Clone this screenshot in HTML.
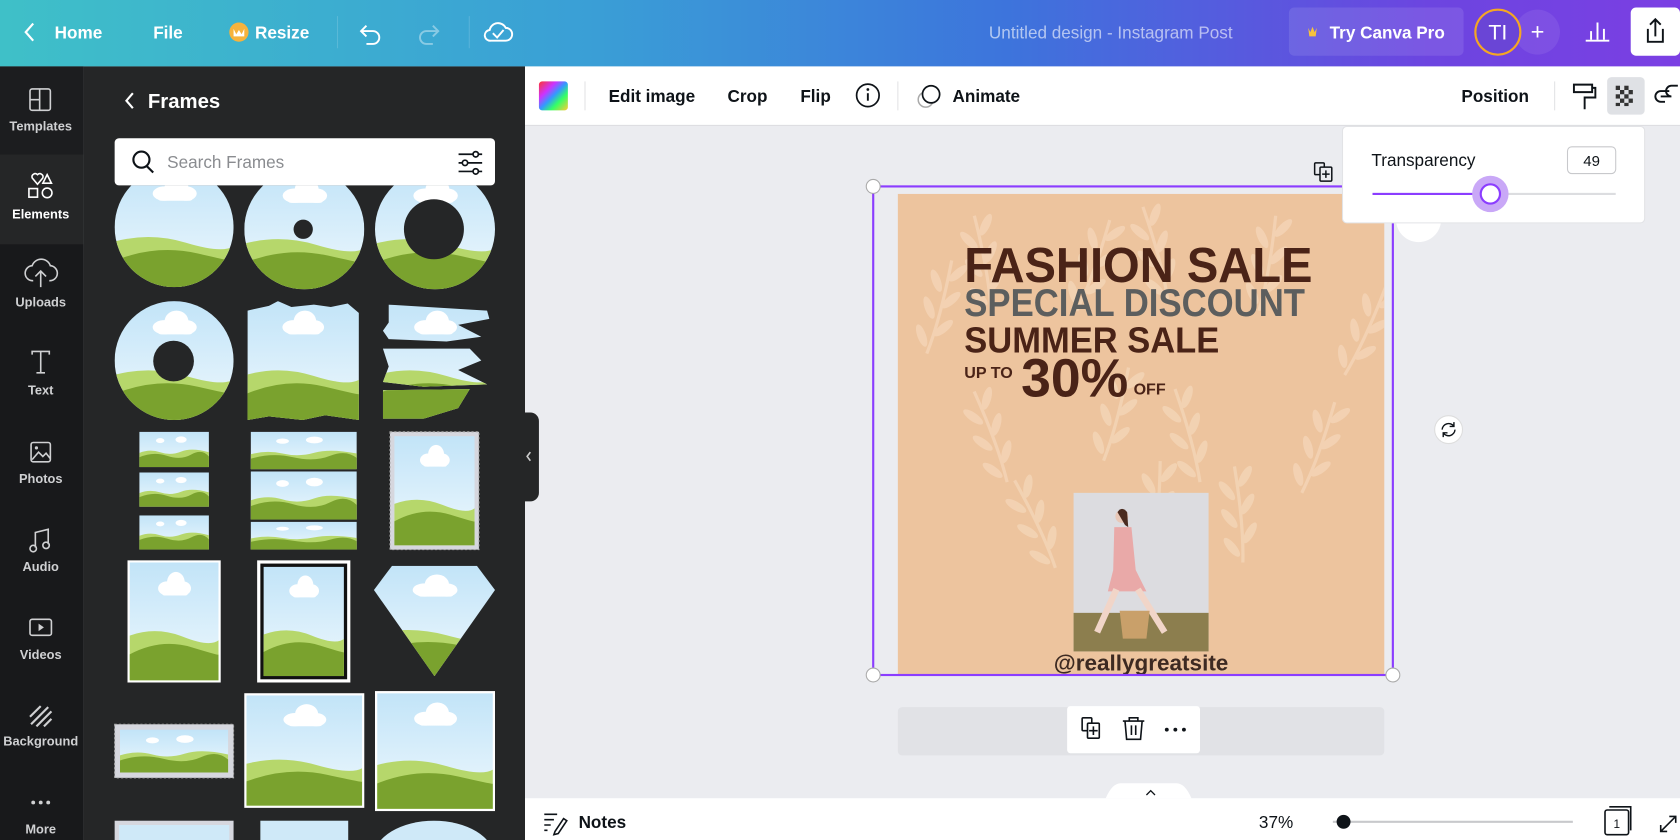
<!DOCTYPE html>
<html><head><meta charset="utf-8"><style>
html,body{margin:0;padding:0;width:1680px;height:840px;overflow:hidden;background:#ebecf0}
svg{display:block;overflow:hidden}
text{font-family:"Liberation Sans",sans-serif}
</style></head><body>
<svg width="1680" height="840" viewBox="0 0 1568 784" preserveAspectRatio="none" xmlns="http://www.w3.org/2000/svg">
<defs>
<linearGradient id="top" x1="0" x2="1" y1="0" y2="0">
<stop offset="0" stop-color="#3fc0c8"/><stop offset="0.35" stop-color="#3a9fd6"/><stop offset="0.6" stop-color="#3d74dc"/><stop offset="0.85" stop-color="#6c45e0"/><stop offset="1" stop-color="#7b3fe3"/></linearGradient>
<linearGradient id="sky" x1="0" x2="0" y1="0" y2="1"><stop offset="0" stop-color="#c2e4f8"/><stop offset="1" stop-color="#eef8fd"/></linearGradient>
<linearGradient id="rb" x1="0" x2="1" y1="0" y2="1"><stop offset="0" stop-color="#f33"/><stop offset="0.3" stop-color="#c3f"/><stop offset="0.5" stop-color="#39f"/><stop offset="0.7" stop-color="#3f6"/><stop offset="1" stop-color="#fc3"/></linearGradient>
<g id="land">
<rect x="0" y="0" width="100" height="100" fill="url(#sky)"/>
<g fill="#fff"><ellipse cx="42" cy="22" rx="10" ry="6"/><ellipse cx="52" cy="17" rx="10" ry="9"/><ellipse cx="60" cy="22" rx="9" ry="6"/><rect x="36" y="21" width="30" height="7" rx="3"/></g>
<path d="M0 62 Q30 54 60 63 T100 66 V100 H0Z" fill="#b6d76b"/>
<path d="M0 78 Q35 64 70 72 T100 78 V100 H0Z" fill="#7aa22e"/>
</g>
<g id="landw">
<rect x="0" y="0" width="100" height="100" fill="url(#sky)"/>
<g fill="#fff"><ellipse cx="30" cy="25" rx="6" ry="7"/><ellipse cx="60" cy="22" rx="8" ry="9"/></g>
<path d="M0 60 Q15 48 30 58 T60 56 T100 58 V100 H0Z" fill="#b6d76b"/>
<path d="M0 72 Q20 55 40 68 T75 64 T100 70 V100 H0Z" fill="#7aa22e"/>
</g>
<clipPath id="c1"><rect x="100" y="173" width="380" height="611"/></clipPath>
<clipPath id="cd"><rect x="838" y="181" width="454" height="449"/></clipPath>
</defs>

<!-- top bar -->
<rect x="0" y="0" width="1568" height="62" fill="url(#top)"/>
<g fill="#fff" font-size="16" font-weight="bold">
<path d="M31 22 L24 30 L31 38" stroke="#fff" stroke-width="2" fill="none"/>
<text x="51" y="36">Home</text>
<text x="143" y="36">File</text>
<circle cx="223" cy="30" r="9" fill="#f6b33d"/><path d="M218 27 l2.5 5 2.5-4 2.5 4 2.5-5 v7 h-10z" fill="#fff"/>
<text x="238" y="36">Resize</text>
</g>
<g stroke="#fff" stroke-width="1.8" fill="none">
<path d="M342 24 l-5 5 5 5 M337 29 h11 a6 6 0 0 1 0 12 h-6"/>
<path d="M404 24 l5 5 -5 5 M409 29 h-11 a6 6 0 0 0 0 12 h6" stroke-opacity="0.4"/>
<path d="M458 38 h14 a6 6 0 0 0 0 -12 a8 8 0 0 0 -15 2 a5 5 0 0 0 1 10z M460 31 l4 4 6-7"/>
</g>
<line x1="315" y1="15" x2="315" y2="45" stroke="#fff" stroke-opacity="0.15"/>
<line x1="438" y1="15" x2="438" y2="45" stroke="#fff" stroke-opacity="0.15"/>
<text x="923" y="36" fill="#fff" fill-opacity="0.6" font-size="16">Untitled design - Instagram Post</text>
<rect x="1203" y="7" width="163" height="45" rx="5" fill="#fff" fill-opacity="0.1"/>
<path d="M1221 26 l2 4 2-5 2 5 2-4 -1 8 h-6z" fill="#f6c23d"/>
<text x="1241" y="36" fill="#fff" font-size="16" font-weight="bold">Try Canva Pro</text>
<circle cx="1435" cy="30" r="21" fill="#fff" fill-opacity="0.08"/>
<circle cx="1398" cy="30" r="21" fill="#6a45d6" stroke="#f5a623" stroke-width="2"/>
<text x="1398" y="37" fill="#fff" font-size="20" text-anchor="middle">TI</text>
<text x="1435" y="37" fill="#fff" font-size="22" text-anchor="middle">+</text>
<g stroke="#fff" stroke-width="1.8"><path d="M1480 38 h22 M1485 37 v-8 M1491 37 v-16 M1497 37 v-10"/></g>
<rect x="1522" y="7" width="46" height="45" rx="5" fill="#fff"/>
<path d="M1538 27 v12 h14 v-12 M1545 34 v-15 M1540 23 l5-5 5 5" stroke="#0e1318" stroke-width="1.8" fill="none"/>

<!-- left rail -->
<rect x="0" y="62" width="78" height="722" fill="#18191b"/>
<rect x="0" y="144" width="78" height="84" fill="#252627"/>
<rect x="0" y="62" width="78" height="82" fill="#1c1d1f"/>
<g fill="#cfd0d2" font-size="12" text-anchor="middle" font-weight="bold">
<rect x="28" y="83" width="19" height="20" fill="none" stroke="#cfd0d2" stroke-width="1.5" rx="2"/><path d="M28 93 h9 M37 83 v20" stroke="#cfd0d2" stroke-width="1.5"/>
<text x="38" y="122">Templates</text>
<g stroke="#fff" stroke-width="1.5" fill="none"><path d="M30 166 a3 3 0 0 1 5 -3 a3 3 0 0 1 5 3 l-5 6z"/><path d="M44 163 l4 8 h-8z"/><rect x="27" y="176" width="8" height="8"/><circle cx="44" cy="180" r="4.5"/></g>
<text x="38" y="204" fill="#fff">Elements</text>
<path d="M31 262 a7 7 0 0 1 -1 -14 a9 9 0 0 1 17 0 a7 7 0 0 1 -1 14 M38 268 v-14 M33 258 l5-5 5 5" stroke="#cfd0d2" stroke-width="1.5" fill="none"/>
<text x="38" y="286">Uploads</text>
<path d="M30 331 v-3 h16 v3 M38 328 v20 M34 348 h8" stroke="#cfd0d2" stroke-width="1.5" fill="none"/>
<text x="38" y="368">Text</text>
<rect x="29" y="413" width="18" height="18" rx="2" fill="none" stroke="#cfd0d2" stroke-width="1.5"/><path d="M30 429 l6-7 4 4 3-3 4 5" stroke="#cfd0d2" stroke-width="1.5" fill="none"/><circle cx="34" cy="418" r="1.5"/>
<text x="38" y="451">Photos</text>
<path d="M33 511 v-14 l12-3 v14" stroke="#cfd0d2" stroke-width="1.5" fill="none"/><circle cx="31" cy="512" r="3" fill="none" stroke="#cfd0d2" stroke-width="1.5"/><circle cx="43" cy="509" r="3" fill="none" stroke="#cfd0d2" stroke-width="1.5"/>
<text x="38" y="533">Audio</text>
<rect x="28" y="578" width="20" height="15" rx="2" fill="none" stroke="#cfd0d2" stroke-width="1.5"/><path d="M36 582 l5 3.5 -5 3.5z"/>
<text x="38" y="615">Videos</text>
<path d="M28 669 l10-10 M29 676 l16-16 M34 678 l14-14 M41 678 l7-7" stroke="#cfd0d2" stroke-width="2"/>
<text x="38" y="696">Background</text>
<circle cx="31" cy="749" r="1.8"/><circle cx="38" cy="749" r="1.8"/><circle cx="45" cy="749" r="1.8"/>
<text x="38" y="778">More</text>
</g>

<!-- panel -->
<rect x="78" y="62" width="412" height="722" fill="#252627"/>
<path d="M124 87 l-6 7 6 7" stroke="#fff" stroke-width="2" fill="none"/>
<text x="138" y="101" fill="#fff" font-size="19" font-weight="bold">Frames</text>
<g clip-path="url(#c1)">
<svg x="107" y="156" width="111" height="112" viewBox="0 0 100 100" preserveAspectRatio="none"><clipPath id="e1"><ellipse cx="50" cy="50" rx="50" ry="50"/></clipPath><use href="#land" clip-path="url(#e1)"/></svg>
<svg x="228" y="158" width="112" height="112" viewBox="0 0 100 100" preserveAspectRatio="none"><clipPath id="e2"><circle cx="50" cy="50" r="50"/></clipPath><use href="#land" clip-path="url(#e2)"/></svg>
<circle cx="283" cy="214" r="9" fill="#252627"/>
<svg x="350" y="158" width="112" height="112" viewBox="0 0 100 100" preserveAspectRatio="none"><use href="#land" clip-path="url(#e2)"/></svg>
<circle cx="405" cy="214" r="28" fill="#252627"/>
<svg x="107" y="281" width="111" height="111" viewBox="0 0 100 100" preserveAspectRatio="none"><use href="#land" clip-path="url(#e2)"/></svg>
<circle cx="162" cy="337" r="19" fill="#252627"/>
<svg x="230" y="281" width="105" height="111" viewBox="0 0 100 100" preserveAspectRatio="none"><clipPath id="t1"><path d="M1 8 L20 4 L28 0 L40 5 L60 3 L75 5 L90 2 L100 10 L100 100 L70 96 L50 100 L20 97 L1 100Z"/></clipPath><use href="#land" clip-path="url(#t1)"/></svg>
<svg x="352" y="281" width="108" height="111" viewBox="0 0 100 100" preserveAspectRatio="none"><clipPath id="t2"><path d="M10 3 L95 8 L97 15 L70 20 L90 30 L60 34 L10 32 L5 25 L10 18Z M5 40 L80 40 L90 50 L70 58 L95 70 L40 72 L5 68 L10 55Z M5 75 L80 74 L70 90 L40 99 L5 99Z"/></clipPath><use href="#land" clip-path="url(#t2)"/></svg>
<svg x="130" y="403" width="65" height="33" viewBox="0 0 100 100" preserveAspectRatio="none"><use href="#landw"/></svg>
<svg x="130" y="441" width="65" height="32" viewBox="0 0 100 100" preserveAspectRatio="none"><use href="#landw"/></svg>
<svg x="130" y="481" width="65" height="32" viewBox="0 0 100 100" preserveAspectRatio="none"><use href="#landw"/></svg>
<svg x="234" y="403" width="99" height="35" viewBox="0 0 100 100" preserveAspectRatio="none"><use href="#landw"/></svg>
<svg x="234" y="440" width="99" height="45" viewBox="0 0 100 100" preserveAspectRatio="none"><use href="#landw"/></svg>
<svg x="234" y="487" width="99" height="26" viewBox="0 0 100 100" preserveAspectRatio="none"><use href="#landw"/></svg>
<rect x="364" y="403" width="83" height="110" fill="#d6d7de" stroke="#aaa" stroke-dasharray="2 2"/>
<svg x="368" y="407" width="75" height="102" viewBox="0 0 100 100" preserveAspectRatio="none"><use href="#land"/></svg>
<rect x="119" y="523" width="87" height="114" fill="#fff"/>
<svg x="121" y="525" width="83" height="110" viewBox="0 0 100 100" preserveAspectRatio="none"><use href="#land"/></svg>
<rect x="240" y="523" width="87" height="114" fill="#fff"/><rect x="243" y="526" width="81" height="108" fill="#111"/>
<svg x="246" y="529" width="75" height="102" viewBox="0 0 100 100" preserveAspectRatio="none"><use href="#land"/></svg>
<svg x="349" y="528" width="113" height="103" viewBox="0 0 100 100" preserveAspectRatio="none"><clipPath id="d1"><path d="M15 0 H85 L100 22 L50 100 L0 22Z"/></clipPath><use href="#land" clip-path="url(#d1)"/></svg>
<rect x="107" y="676" width="111" height="50" fill="#d6d7de" stroke="#aaa" stroke-dasharray="2 2"/>
<svg x="112" y="681" width="101" height="40" viewBox="0 0 100 100" preserveAspectRatio="none"><use href="#landw"/></svg>
<rect x="228" y="647" width="112" height="107" fill="#fff"/>
<svg x="230" y="649" width="108" height="103" viewBox="0 0 100 100" preserveAspectRatio="none"><use href="#land"/></svg>
<rect x="350" y="645" width="112" height="112" fill="#fff"/>
<svg x="352" y="647" width="108" height="108" viewBox="0 0 100 100" preserveAspectRatio="none"><use href="#land"/></svg>
<rect x="107" y="766" width="111" height="20" fill="#d6d7de"/><rect x="111" y="770" width="103" height="16" fill="#cfe9f8"/>
<rect x="243" y="766" width="82" height="20" fill="#cfe9f8"/>
<ellipse cx="405" cy="800" rx="56" ry="34" fill="#cfe9f8"/>
</g>
<rect x="107" y="129" width="355" height="44" rx="4" fill="#fff"/>
<circle cx="132" cy="149" r="7.5" fill="none" stroke="#0e1318" stroke-width="2"/><path d="M137 155 l6 6" stroke="#0e1318" stroke-width="2"/>
<text x="156" y="157" fill="#8a8c90" font-size="16">Search Frames</text>
<g stroke="#0e1318" stroke-width="1.6" fill="#fff"><path d="M428 144 h22 M428 152 h22 M428 160 h22"/><circle cx="444" cy="144" r="2.5"/><circle cx="434" cy="152" r="2.5"/><circle cx="444" cy="160" r="2.5"/></g>
<path d="M490 385 h5 a8 8 0 0 1 8 8 v67 a8 8 0 0 1 -8 8 h-5z" fill="#252627"/>
<path d="M495 422 l-3 4 3 4" stroke="#ccc" stroke-width="1.5" fill="none"/>

<!-- toolbar -->
<rect x="490" y="62" width="1078" height="55" fill="#fff"/>
<line x1="490" y1="117" x2="1568" y2="117" stroke="#dcdde0"/>
<rect x="503" y="76" width="27" height="27" rx="3" fill="url(#rb)"/>
<line x1="546" y1="76" x2="546" y2="103" stroke="#e2e3e5"/>
<g fill="#0e1318" font-size="16" font-weight="bold">
<text x="568" y="95">Edit image</text>
<text x="679" y="95">Crop</text>
<text x="747" y="95">Flip</text>
<text x="889" y="95">Animate</text>
<text x="1364" y="95">Position</text>
</g>
<circle cx="810" cy="89" r="10.5" fill="none" stroke="#0e1318" stroke-width="1.6"/><path d="M810 87 v7" stroke="#0e1318" stroke-width="1.8"/><circle cx="810" cy="83.5" r="1.3" fill="#0e1318"/>
<line x1="838" y1="76" x2="838" y2="103" stroke="#e2e3e5"/>
<circle cx="864" cy="93" r="7" fill="none" stroke="#aaa" stroke-width="1.4"/><circle cx="869" cy="88" r="8" fill="#fff" stroke="#0e1318" stroke-width="1.6"/>
<line x1="1451" y1="76" x2="1451" y2="103" stroke="#e2e3e5"/>
<path d="M1469 79 h17 v7 h-17z M1486 82 h3 v9 h-10 v5 M1479 96 v6" stroke="#0e1318" stroke-width="1.8" fill="none"/>
<rect x="1500" y="72" width="35" height="35" rx="4" fill="#dfe1e5"/>
<g fill="#333"><rect x="1508" y="80" width="4" height="4"/><rect x="1516" y="80" width="4" height="4"/><rect x="1512" y="84" width="4" height="4"/><rect x="1520" y="84" width="4" height="4"/><rect x="1508" y="88" width="4" height="4"/><rect x="1516" y="88" width="4" height="4"/><rect x="1512" y="92" width="4" height="4"/><rect x="1520" y="92" width="4" height="4"/><rect x="1508" y="96" width="4" height="3"/><rect x="1516" y="96" width="4" height="3"/></g>
<path d="M1558 85 h-8 a5 5 0 0 0 0 10 h4 M1550 90 h10 a5 5 0 0 1 0 -10 h6" stroke="#0e1318" stroke-width="1.8" fill="none"/>

<!-- canvas -->
<rect x="838" y="181" width="454" height="449" fill="#edc49e"/>
<g fill="#f5d8bb" clip-path="url(#cd)" opacity="0.7">
<g id="leaf"><path d="M0 0 Q4 -35 0 -90" stroke="#f5d8bb" stroke-width="3" fill="none"/>
<ellipse cx="-9" cy="-15" rx="4" ry="11" transform="rotate(-35 -9 -15)"/><ellipse cx="9" cy="-27" rx="4" ry="11" transform="rotate(35 9 -27)"/>
<ellipse cx="-9" cy="-42" rx="4" ry="11" transform="rotate(-35 -9 -42)"/><ellipse cx="9" cy="-54" rx="4" ry="11" transform="rotate(35 9 -54)"/>
<ellipse cx="-9" cy="-68" rx="4" ry="11" transform="rotate(-35 -9 -68)"/><ellipse cx="9" cy="-80" rx="4" ry="11" transform="rotate(35 9 -80)"/></g>
<use href="#leaf" transform="translate(865 330) rotate(15)"/>
<use href="#leaf" transform="translate(925 290) rotate(-10)"/>
<use href="#leaf" transform="translate(1005 290) rotate(20)"/>
<use href="#leaf" transform="translate(1090 280) rotate(-15)"/>
<use href="#leaf" transform="translate(1175 290) rotate(10)"/>
<use href="#leaf" transform="translate(1255 350) rotate(25)"/>
<use href="#leaf" transform="translate(940 450) rotate(-20)"/>
<use href="#leaf" transform="translate(1030 430) rotate(15)"/>
<use href="#leaf" transform="translate(1120 450) rotate(-15)"/>
<use href="#leaf" transform="translate(1215 460) rotate(20)"/>
<use href="#leaf" transform="translate(1160 525) rotate(-5)"/>
<use href="#leaf" transform="translate(985 530) rotate(-25)"/>
<use href="#leaf" transform="translate(1075 520) rotate(5)"/>
</g>
<g font-weight="bold">
<text x="900" y="263" font-size="46" fill="#4a2317" textLength="325" lengthAdjust="spacingAndGlyphs">FASHION SALE</text>
<text x="900" y="295" font-size="36" fill="#5c5e5e" textLength="318" lengthAdjust="spacingAndGlyphs">SPECIAL DISCOUNT</text>
<text x="900" y="329" font-size="34" fill="#4a2317" textLength="238" lengthAdjust="spacingAndGlyphs">SUMMER SALE</text>
<text x="900" y="353" font-size="15" fill="#4a2317">UP TO</text>
<text x="953" y="370" font-size="50" fill="#4a2317" textLength="100" lengthAdjust="spacingAndGlyphs">30%</text>
<text x="1058" y="368" font-size="15" fill="#4a2317">OFF</text>
</g>
<rect x="1002" y="460" width="126" height="148" fill="#dcdce0"/>
<rect x="1002" y="572" width="126" height="36" fill="#8c7e4e"/>
<circle cx="1047" cy="482" r="6" fill="#e9c8b8"/><path d="M1043 478 q4 -6 9 0 l1 14 -3 -2z" fill="#4a2b20"/>
<path d="M1040 492 h16 l4 40 l10 20 h-36 l5 -20z" fill="#e9a9a8"/>
<path d="M1042 550 l-18 40 M1062 550 l25 40" stroke="#f1d5c8" stroke-width="6"/>
<path d="M1045 570 h28 l-3 26 h-22z" fill="#c9a06a"/>
<text x="1065" y="626" font-size="21" font-weight="bold" fill="#3d2a22" text-anchor="middle">@reallygreatsite</text>

<!-- selection -->
<rect x="815" y="174" width="485" height="456" fill="none" stroke="#8b3dff" stroke-width="2"/>
<g fill="#fff" stroke="#aaa" stroke-width="1"><circle cx="815" cy="174" r="6.5"/><circle cx="815" cy="630" r="6.5"/><circle cx="1300" cy="630" r="6.5"/></g>
<g stroke="#0e1318" stroke-width="1.4" fill="none"><rect x="1227" y="152" width="9" height="11" rx="1"/><rect x="1232" y="156" width="11" height="13" rx="1" fill="#ebecf0"/><path d="M1237.5 159 v7 M1234 162.5 h7"/></g>
<circle cx="1324" cy="205" r="21" fill="#fff"/>
<circle cx="1352" cy="401" r="13" fill="#fff" stroke="#ddd"/>
<path d="M1346 401 a6 6 0 0 1 11 -3 M1358 401 a6 6 0 0 1 -11 3 M1357 394 v4 h-4 M1347 408 v-4 h4" stroke="#0e1318" stroke-width="1.3" fill="none"/>

<!-- popup -->
<rect x="1253" y="118" width="282" height="90" rx="4" fill="#fff" stroke="#e2e3e6"/>
<text x="1280" y="155" font-size="16" fill="#0e1318">Transparency</text>
<rect x="1463" y="137" width="45" height="25" rx="4" fill="#fff" stroke="#c8c9cc"/>
<text x="1485.5" y="155" font-size="14" fill="#0e1318" text-anchor="middle">49</text>
<line x1="1281" y1="181" x2="1508" y2="181" stroke="#dcdde0" stroke-width="2"/>
<line x1="1281" y1="181" x2="1391" y2="181" stroke="#8b3dff" stroke-width="2"/>
<circle cx="1391" cy="181" r="17" fill="#c9a8f7"/>
<circle cx="1391" cy="181" r="9" fill="#fff" stroke="#8b3dff" stroke-width="2"/>

<!-- page controls -->
<rect x="838" y="660" width="454" height="45" rx="4" fill="#e1e2e6"/>
<rect x="996" y="659" width="124" height="44" rx="3" fill="#fff"/>
<g stroke="#0e1318" stroke-width="1.5" fill="none"><rect x="1010" y="670" width="9" height="12" rx="1"/><rect x="1015" y="675" width="11" height="14" rx="1" fill="#fff"/><path d="M1020.5 678 v8 M1016.5 682 h8"/>
<path d="M1048 673 h20 M1054 673 v-3 h8 v3 M1050 673 l1.5 17 h13 l1.5 -17 M1056 677 v9 M1060 677 v9"/></g>
<circle cx="1089" cy="681" r="1.8" fill="#0e1318"/><circle cx="1097" cy="681" r="1.8" fill="#0e1318"/><circle cx="1105" cy="681" r="1.8" fill="#0e1318"/>

<!-- bottom bar -->
<path d="M1032 745 q6 -14 14 -14 h52 q8 0 14 14z" fill="#fff"/>
<path d="M1070 742 l4 -4 4 4" stroke="#0e1318" stroke-width="1.2" fill="none"/>
<rect x="490" y="745" width="1078" height="39" fill="#fff"/>
<g stroke="#0e1318" stroke-width="1.5" fill="none"><path d="M508 760 h12 M508 765 h9 M508 770 h6 M508 775 h3 M518 776 l8 -12 3 2 -8 12 -4 1z"/></g>
<text x="540" y="773" font-size="16" fill="#0e1318" font-weight="bold">Notes</text>
<text x="1175" y="773" font-size="16" fill="#0e1318">37%</text>
<line x1="1244" y1="767" x2="1468" y2="767" stroke="#c8c9cc" stroke-width="2"/>
<circle cx="1254" cy="767" r="6.5" fill="#0e1318"/>
<rect x="1498" y="756" width="22" height="23" rx="2" fill="#fff" stroke="#0e1318" stroke-width="1.5"/>
<path d="M1502 753 h20 v22" stroke="#0e1318" stroke-width="1.5" fill="none"/>
<text x="1509" y="773" font-size="11" fill="#0e1318" text-anchor="middle">1</text>
<path d="M1550 776 l14 -14 M1558 762 h6 v6 M1550 770 v6 h6" stroke="#0e1318" stroke-width="1.5" fill="none"/>
</svg>
</body></html>
